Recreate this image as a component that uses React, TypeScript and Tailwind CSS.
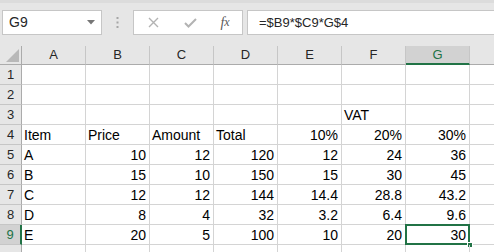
import React from "react";

const cols = ["A", "B", "C", "D", "E", "F", "G"];

type Cell = { v: string; right?: boolean };

const L = (v: string): Cell => ({ v });
const R = (v: string): Cell => ({ v, right: true });

const rows: Cell[][] = [
  [],
  [],
  [L(""), L(""), L(""), L(""), L(""), L("VAT"), L("")],
  [L("Item"), L("Price"), L("Amount"), L("Total"), R("10%"), R("20%"), R("30%")],
  [L("A"), R("10"), R("12"), R("120"), R("12"), R("24"), R("36")],
  [L("B"), R("15"), R("10"), R("150"), R("15"), R("30"), R("45")],
  [L("C"), R("12"), R("12"), R("144"), R("14.4"), R("28.8"), R("43.2")],
  [L("D"), R("8"), R("4"), R("32"), R("3.2"), R("6.4"), R("9.6")],
  [L("E"), R("20"), R("5"), R("100"), R("10"), R("20"), R("30")],
  [],
];

const FormulaBar = () => (
  <div className="h-[46px] bg-[#e6e6e6] border-t-[3px] border-[#dcdcdc] flex items-start pt-[7px] pl-[2px] gap-0">
    <div className="w-[100px] h-[25px] bg-white border border-[#c6c6c6] flex items-center justify-between pl-[6px] pr-[6px] text-[14px] text-[#262626]">
      <span>G9</span>
      <svg width="8" height="5" viewBox="0 0 8 5">
        <path d="M0 0 L8 0 L4 4.5 Z" fill="#767676" />
      </svg>
    </div>
    <div className="w-[31px] h-[25px] flex items-center justify-center">
      <svg width="3" height="11" viewBox="0 0 3 11">
        <rect x="0.5" y="0" width="2" height="2" fill="#a6a6a6" />
        <rect x="0.5" y="4.5" width="2" height="2" fill="#a6a6a6" />
        <rect x="0.5" y="9" width="2" height="2" fill="#a6a6a6" />
      </svg>
    </div>
    <div className="w-[110px] h-[25px] bg-white border border-[#c6c6c6] flex items-center">
      <div className="w-[38px] flex justify-center">
        <svg width="11" height="11" viewBox="0 0 11 11">
          <path d="M1 1 L10 10 M10 1 L1 10" stroke="#b3b3b3" strokeWidth="1.4" />
        </svg>
      </div>
      <div className="w-[36px] flex justify-center">
        <svg width="13" height="10" viewBox="0 0 13 10">
          <path d="M1 5 L4.5 8.5 L12 1" stroke="#b3b3b3" strokeWidth="2" fill="none" />
        </svg>
      </div>
      <div className="w-[34px] flex justify-center font-['Liberation_Serif',serif] italic text-[14px] text-[#595959] leading-none">
        f<span className="text-[12px]">x</span>
      </div>
    </div>
    <div className="ml-[4px] flex-1 h-[25px] bg-white border border-r-0 border-[#c6c6c6] flex items-center pl-[11px] text-[13px] text-[#262626]">
      =$B9*$C9*G$4
    </div>
  </div>
);

const Corner = () => (
  <div className="h-[19px] bg-[#e6e6e6] border-r border-b border-[#ababab] flex items-end justify-end pr-[2px] pb-[2px]">
    <svg width="13" height="13" viewBox="0 0 13 13">
      <path d="M13 0 L13 13 L0 13 Z" fill="#b8b8b8" />
    </svg>
  </div>
);

export default function App() {
  return (
    <div className="w-[494px] h-[252px] overflow-hidden bg-white font-['Liberation_Sans',sans-serif] text-[14px] text-black">
      <FormulaBar />
      <div className="grid grid-cols-[22px_repeat(7,64px)_1fr]">
        <Corner />
        {cols.map((c) => (
          <div
            key={c}
            className={
              c === "G"
                ? "h-[19px] bg-[#d2d2d2] border-r border-[#c6c6c6] border-b-2 border-b-[#217346] flex items-center justify-center text-[13px] text-[#217346]"
                : "h-[19px] bg-[#e6e6e6] border-r border-[#c6c6c6] border-b border-b-[#ababab] flex items-center justify-center text-[13px] text-[#262626]"
            }
          >
            {c}
          </div>
        ))}
        <div className="h-[19px] bg-[#e6e6e6] border-b border-[#ababab]" />
        {rows.map((r, i) => {
          const n = i + 1;
          return (
            <React.Fragment key={n}>
              <div
                className={
                  n === 9
                    ? "h-[20px] bg-[#d2d2d2] border-b border-[#c6c6c6] border-r-2 border-r-[#217346] flex items-center justify-center text-[13px] text-[#217346]"
                    : "h-[20px] bg-[#e6e6e6] border-b border-[#c6c6c6] border-r border-r-[#ababab] flex items-center justify-center text-[13px] text-[#262626]"
                }
              >
                {n < 10 ? n : null}
              </div>
              {cols.map((c, j) => {
                const cell = r[j];
                const sel = n === 9 && c === "G";
                return (
                  <div
                    key={c}
                    className={
                      "relative h-[20px] border-r border-b border-[#d4d4d4] leading-[21px] px-[3px] whitespace-nowrap " +
                      (cell?.right ? "text-right" : "text-left pl-[2px]")
                    }
                  >
                    {cell?.v}
                    {sel && (
                      <>
                        <div className="absolute -left-px -top-px right-[-1px] bottom-[-1px] border-2 border-[#217346]" />
                        <div className="absolute right-[-4px] bottom-[-4px] w-[6px] h-[6px] bg-[#217346] border border-white" />
                      </>
                    )}
                  </div>
                );
              })}
              <div className="h-[20px] border-b border-[#d4d4d4]" />
            </React.Fragment>
          );
        })}
      </div>
    </div>
  );
}
